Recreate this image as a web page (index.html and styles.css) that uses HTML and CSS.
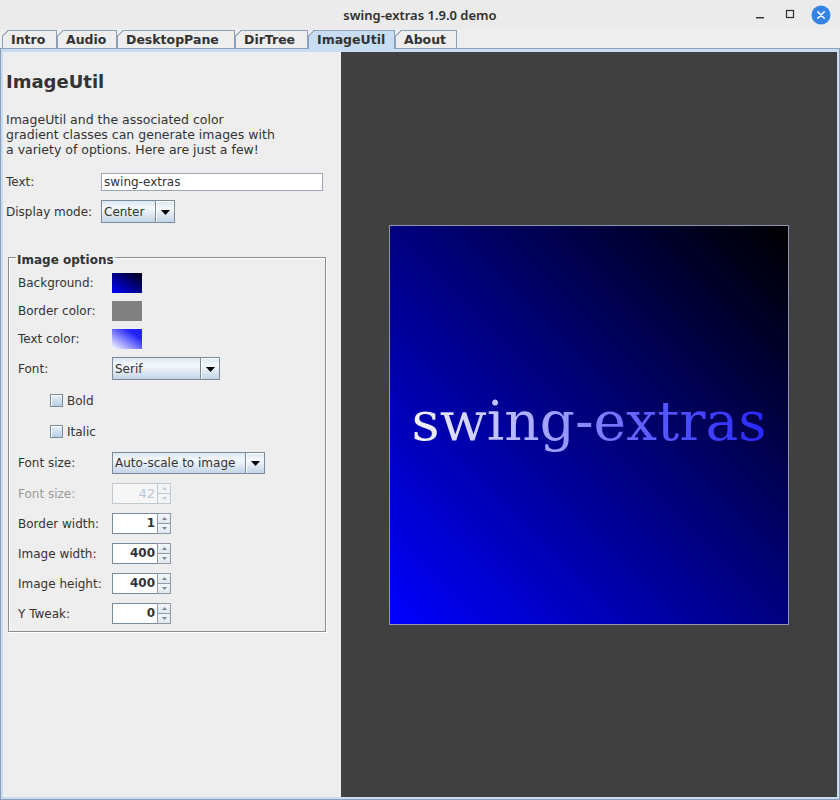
FILE: index.html
```html
<!DOCTYPE html>
<html>
<head>
<meta charset="utf-8">
<link rel="stylesheet" href="styles.css">
</head>
<body>
<div class="window">
  <div class="titlebar">
    <div></div>
    <div class="title">swing-extras 1.9.0 demo</div>
    <div class="controls">
      <svg class="ctl-min" width="10" height="10" viewBox="0 0 10 10"><rect x="1" y="8" width="8" height="1.4" fill="#2e2e2e"/></svg>
      <svg class="ctl-max" width="10" height="10" viewBox="0 0 10 10"><rect x="1.5" y="1.5" width="7" height="7" fill="none" stroke="#2e2e2e" stroke-width="1.2"/></svg>
      <svg class="ctl-close" width="20" height="20" viewBox="0 0 20 20"><circle cx="10" cy="10" r="9.5" fill="#3584e4"/><path d="M6.8 6.8 L13.2 13.2 M13.2 6.8 L6.8 13.2" stroke="#fff" stroke-width="1.6" stroke-linecap="round"/></svg>
    </div>
  </div>
  <div class="tabs">
    <div class="tab t-intro">Intro</div>
    <div class="tab t-audio">Audio</div>
    <div class="tab t-desktop">DesktopPane</div>
    <div class="tab t-dirtree">DirTree</div>
    <div class="tab t-imageutil selected">ImageUtil</div>
    <div class="tab t-about">About</div>
  </div>
  <div class="content">
    <div class="left">
      <div class="heading">ImageUtil</div>
      <div class="desc">ImageUtil and the associated color<br>gradient classes can generate images with<br>a variety of options. Here are just a few!</div>
      <div class="frow frow-text">
        <span class="flbl">Text:</span>
        <div class="textfield">swing-extras</div>
      </div>
      <div class="frow frow-mode">
        <span class="flbl">Display mode:</span>
        <div class="combo combo-mode"><span class="combo-val">Center</span><span class="combo-btn"><svg width="9" height="5" viewBox="0 0 9 5"><path d="M0 0 H9 L4.5 5 Z" fill="#000"/></svg></span></div>
      </div>
      <fieldset class="group">
        <legend>Image options</legend>
        <div class="row r-sw r-first"><span class="lbl">Background:</span><span class="swatch sw-bg"></span></div>
        <div class="row r-sw"><span class="lbl">Border color:</span><span class="swatch sw-border"></span></div>
        <div class="row r-sw"><span class="lbl">Text color:</span><span class="swatch sw-text"></span></div>
        <div class="row r-font"><span class="lbl">Font:</span><div class="combo combo-font"><span class="combo-val">Serif</span><span class="combo-btn"><svg width="9" height="5" viewBox="0 0 9 5"><path d="M0 0 H9 L4.5 5 Z" fill="#000"/></svg></span></div></div>
        <div class="row r-check"><span class="check"></span><span class="check-lbl">Bold</span></div>
        <div class="row r-check"><span class="check"></span><span class="check-lbl">Italic</span></div>
        <div class="row r-fsize"><span class="lbl">Font size:</span><div class="combo combo-size"><span class="combo-val">Auto-scale to image</span><span class="combo-btn"><svg width="9" height="5" viewBox="0 0 9 5"><path d="M0 0 H9 L4.5 5 Z" fill="#000"/></svg></span></div></div>
        <div class="row r-spin disabled"><span class="lbl">Font size:</span><div class="spinner"><span class="spin-val">42</span><span class="spin-btns"><span class="spin-b"><svg width="5" height="3" viewBox="0 0 5 3"><path d="M0 3 L2.5 0 L5 3 Z" fill="currentColor"/></svg></span><span class="spin-b"><svg width="5" height="3" viewBox="0 0 5 3"><path d="M0 0 L5 0 L2.5 3 Z" fill="currentColor"/></svg></span></span></div></div>
        <div class="row r-spin"><span class="lbl">Border width:</span><div class="spinner"><span class="spin-val">1</span><span class="spin-btns"><span class="spin-b"><svg width="5" height="3" viewBox="0 0 5 3"><path d="M0 3 L2.5 0 L5 3 Z" fill="currentColor"/></svg></span><span class="spin-b"><svg width="5" height="3" viewBox="0 0 5 3"><path d="M0 0 L5 0 L2.5 3 Z" fill="currentColor"/></svg></span></span></div></div>
        <div class="row r-spin"><span class="lbl">Image width:</span><div class="spinner"><span class="spin-val">400</span><span class="spin-btns"><span class="spin-b"><svg width="5" height="3" viewBox="0 0 5 3"><path d="M0 3 L2.5 0 L5 3 Z" fill="currentColor"/></svg></span><span class="spin-b"><svg width="5" height="3" viewBox="0 0 5 3"><path d="M0 0 L5 0 L2.5 3 Z" fill="currentColor"/></svg></span></span></div></div>
        <div class="row r-spin"><span class="lbl">Image height:</span><div class="spinner"><span class="spin-val">400</span><span class="spin-btns"><span class="spin-b"><svg width="5" height="3" viewBox="0 0 5 3"><path d="M0 3 L2.5 0 L5 3 Z" fill="currentColor"/></svg></span><span class="spin-b"><svg width="5" height="3" viewBox="0 0 5 3"><path d="M0 0 L5 0 L2.5 3 Z" fill="currentColor"/></svg></span></span></div></div>
        <div class="row r-spin"><span class="lbl">Y Tweak:</span><div class="spinner"><span class="spin-val">0</span><span class="spin-btns"><span class="spin-b"><svg width="5" height="3" viewBox="0 0 5 3"><path d="M0 3 L2.5 0 L5 3 Z" fill="currentColor"/></svg></span><span class="spin-b"><svg width="5" height="3" viewBox="0 0 5 3"><path d="M0 0 L5 0 L2.5 3 Z" fill="currentColor"/></svg></span></span></div></div>
      </fieldset>
    </div>
    <div class="right">
      <div class="preview"><span class="preview-text">swing-extras</span></div>
    </div>
  </div>
</div>
</body>
</html>
```

FILE: styles.css
```css
html, body {
  margin: 0;
  padding: 0;
  width: 840px;
  height: 800px;
  overflow: hidden;
  background: #eeeeee;
  font-family: "DejaVu Sans", sans-serif;
  font-size: 12px;
  color: #333333;
}

.window {
  width: 840px;
  height: 800px;
  display: flex;
  flex-direction: column;
}

/* Title bar */
.titlebar {
  height: 29px;
  flex: none;
  display: grid;
  grid-template-columns: 1fr auto 1fr;
  align-items: center;
  background: #ebebeb;
}
.title {
  font-family: "Noto Sans", "DejaVu Sans", sans-serif;
  font-weight: 600;
  font-size: 13px;
  color: #2e2e2e;
}
.controls {
  justify-self: end;
  display: flex;
  align-items: center;
  padding-right: 9px;
}
.controls svg { display: block; }
.ctl-min { margin-right: 20px; margin-top: -1px; }
.ctl-max { margin-right: 16px; margin-top: -1px; }

/* Tabs */
.tabs {
  height: 19px;
  flex: none;
  display: flex;
  align-items: flex-end;
  padding-left: 2px;
}
.tab {
  height: 18px;
  box-sizing: border-box;
  padding: 1px 0 0 9px;
  font-weight: bold;
  font-size: 12.5px;
  line-height: 17px;
  color: #333333;
  white-space: nowrap;
  background: linear-gradient(135deg, #8da0b8 0 5.3px, #eeeeee 5.3px);
  box-shadow: inset 1px 0 0 #8da0b8, inset 0 1px 0 #8da0b8, inset -1px 0 0 #8da0b8;
  clip-path: polygon(6px 0, 100% 0, 100% 100%, 0 100%, 0 6px);
}
.t-intro { width: 55px; }
.t-audio { width: 60px; }
.t-desktop { width: 118px; }
.t-dirtree { width: 73px; }
.t-imageutil { width: 87px; }
.t-about { width: 62px; }
.tab.selected {
  position: relative;
  z-index: 1;
  height: 19px;
  margin-bottom: -1px;
  background: linear-gradient(135deg, #8da0b8 0 5.3px, #c8ddf2 5.3px);
}

/* Content */
.content {
  flex: 1;
  display: flex;
  min-height: 0;
  border: 1px solid #8da0b8;
  padding: 3px 2px 2px 2px;
  background: #c8ddf2;
}
.left {
  width: 338px;
  flex: none;
  background: #eeeeee;
  padding-left: 3px;
  box-sizing: border-box;
}
.right {
  flex: 1;
  background: #404040;
  display: flex;
  align-items: center;
  justify-content: center;
}

.heading {
  margin-top: 19px;
  font-weight: bold;
  font-size: 18px;
  line-height: 22px;
  color: #333333;
}
.desc {
  margin-top: 18.5px;
  font-size: 12.5px;
  line-height: 15px;
  color: #333333;
}
.frow {
  display: flex;
  align-items: center;
}
.flbl { width: 95px; flex: none; }
.frow-text { margin-top: 16.5px; height: 18px; }
.frow-mode { margin-top: 9px; height: 23px; }

.textfield {
  width: 222px;
  height: 18px;
  box-sizing: border-box;
  background: #ffffff;
  border: 1px solid #9aa6b4;
  padding-left: 2px;
  line-height: 16px;
  color: #333333;
}

/* Combo boxes */
.combo {
  display: flex;
  box-sizing: border-box;
  border: 1px solid #7a8a99;
  background: linear-gradient(#dde8f3, #f4f8fb 35%, #e2eaf3 60%, #c3d5e8);
}
.combo-val {
  flex: 1;
  padding-left: 2px;
  display: flex;
  align-items: center;
  white-space: nowrap;
}
.combo-btn {
  width: 18px;
  flex: none;
  border-left: 1px solid #7a8a99;
  display: flex;
  align-items: center;
  justify-content: center;
  box-shadow: inset 1px 1px 0 #ffffff;
}
.combo-btn svg { display: block; margin-top: 1px; }
.combo-mode { width: 74px; height: 23px; }
.combo-font { width: 108px; height: 23px; }
.combo-size { width: 153px; height: 22px; }

/* Group box */
.group {
  margin: 24px 0 0 2px;
  width: 318px;
  box-sizing: border-box;
  min-inline-size: 0;
  padding: 0 0 7px 9px;
  border: 1px solid #8e8e8e;
  box-shadow: inset 1px 1px 0 #ffffff, 1px 1px 0 #ffffff;
}
.group legend {
  font-weight: bold;
  font-size: 12px;
  line-height: 15px;
  padding: 6px 1px 0 1px;
  margin-left: -2px;
  color: #333333;
}
.row {
  display: flex;
  align-items: center;
}
.lbl { width: 94px; flex: none; }
.r-sw { height: 20px; margin-top: 8px; }
.r-sw.r-first { margin-top: 5px; }
.r-font { height: 23px; margin-top: 8px; }
.r-check { height: 21px; margin-top: 10px; padding-left: 32px; }
.r-fsize { height: 22px; margin-top: 10px; }
.r-spin { height: 21px; margin-top: 9px; }

.swatch {
  width: 30px;
  height: 20px;
  display: block;
}
.sw-bg { background: linear-gradient(to top right, #0000ff, #000010); }
.sw-border { background: #808080; }
.sw-text { background: linear-gradient(to top right, #ffffff, #2222ff 75%); }

.check {
  width: 13px;
  height: 13px;
  box-sizing: border-box;
  border: 1px solid #7a8a99;
  background: linear-gradient(#e8f0f8, #b8cfe5);
  box-shadow: inset 1px 1px 0 #ffffff;
}
.check-lbl { margin-left: 4px; }

/* Spinners */
.spinner {
  width: 59px;
  height: 21px;
  display: flex;
}
.spin-val {
  flex: 1;
  box-sizing: border-box;
  background: #ffffff;
  border: 1px solid #7a8a99;
  border-right: none;
  text-align: right;
  padding-right: 2px;
  font-weight: bold;
  line-height: 19px;
  color: #333333;
}
.spin-btns {
  width: 14px;
  flex: none;
  display: flex;
  flex-direction: column;
}
.spin-b {
  flex: 1;
  box-sizing: border-box;
  border: 1px solid #8f9aa6;
  background: linear-gradient(#f4f7fa, #dfe7ef);
  display: flex;
  align-items: center;
  justify-content: center;
  color: #7f8790;
}
.spin-b + .spin-b { border-top: none; }
.spin-b svg { display: block; }

.disabled .lbl { color: #9a9a9a; }
.disabled .spin-val {
  background: #f6f6f6;
  border-color: #c0c8d2;
  color: #b8c8dc;
  font-weight: normal;
  font-size: 13px;
}
.disabled .spin-b {
  border-color: #c0c8d2;
  color: #c6ccd2;
  background: #f2f4f6;
}

/* Preview */
.preview {
  width: 400px;
  height: 400px;
  box-sizing: border-box;
  border: 1px solid #8e94b4;
  background: linear-gradient(to top right, #0000ff, #000000);
  display: flex;
  align-items: center;
  justify-content: center;
}
.preview-text {
  font-family: "DejaVu Serif", serif;
  font-size: 55px;
  line-height: 64px;
  margin-bottom: 8px;
  background: linear-gradient(to right, #f6f6ff 0%, #a0a0ff 40%, #6060ff 65%, #2626ff 100%);
  -webkit-background-clip: text;
  background-clip: text;
  color: transparent;
}
```
